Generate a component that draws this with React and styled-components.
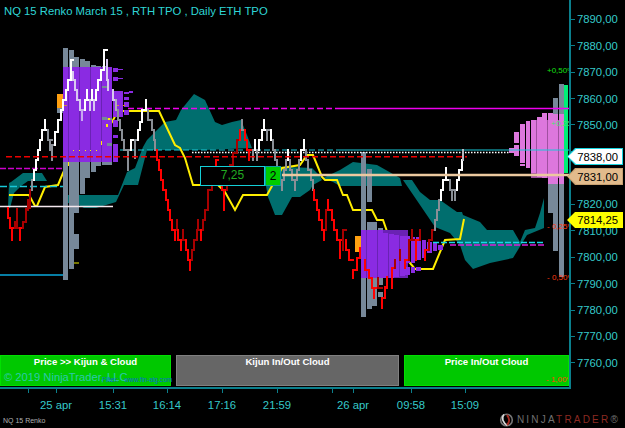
import React from 'react';
import styled, { createGlobalStyle } from 'styled-components';

const GlobalStyle = createGlobalStyle`
  html, body { margin: 0; padding: 0; background: #000; }
  body { font-family: "Liberation Sans", Arial, sans-serif; }
`;

const AXIS = '#0b7f8c';
const LABEL = '#35c9c9';
const CLOUD = '#006e6e';
const PURPLE = '#8a2be2';
const PINK = '#dd77dd';
const SLATE = '#778899';

// 7840 and 7830 sit behind the price badges, so their rows stay empty
const PRICES = ['7890,00', '7880,00', '7870,00', '7860,00', '7850,00', '', '', '7820,00', '7810,00', '7800,00', '7790,00', '7780,00', '7770,00', '7760,00'];

const TICKS = [
    { x: 28 },
    { x: 56, label: '25 apr' },
    { x: 113, label: '15:31' },
    { x: 167, label: '16:14' },
    { x: 222, label: '17:16' },
    { x: 277, label: '21:59' },
    { x: 332 },
    { x: 353, label: '26 apr' },
    { x: 411, label: '09:58' },
    { x: 465, label: '15:09' },
];

const CLOUDS = [
    '9,183 11,182 23,173 42,173 47,181 28,181 21,186 14,193 10,208 8,208',
    '63,195 118,195 127,172 135,168 143,147 147,140 165,122 176,120 181,110 194,94 205,100 215,122 222,125 232,122 241,120 247,135 252,148 205,150 147,150 138,185 124,185 116,202 96,208 84,208 75,203 63,203',
    '266,186 268,197 275,215 282,215 292,197 300,197 310,190 313,185 322,180 320,176 312,168 265,166',
    '323,178 340,170 353,162 377,165 400,178 402,186 340,186 333,182',
    '403,180 412,180 420,192 430,200 440,200 457,212 462,212 463,215 480,222 487,230 513,230 520,242 525,230 535,228 540,213 544,198 544,228 527,235 513,258 490,263 473,269 465,260 460,245 450,233 435,227',
];

const YELLOW = '9,195 29,195 35,206 37,206 45,187 58,185 63,173 68,163 107,130 112,122 118,111 159,111 175,145 180,148 185,158 193,185 218,185 225,192 235,210 243,195 267,195 282,168 300,165 307,155 313,155 322,177 325,180 337,180 343,195 347,195 353,210 372,210 377,220 383,220 390,240 410,263 415,269 433,269 445,240 460,239 464,219';

// bits of the kijun and poc marks that show through the profile: [x, y, w, h, fill]
const MARKS = [
    [108, 118, 2, 2, '#ffee00'], [106, 124, 2, 3, '#ffee00'], [101, 141, 1, 4, '#ffee00'], [68, 162, 1, 4, '#ffee00'],
    [73, 150, 1, 1, '#ffee00'], [79, 150, 1, 1, '#ffee00'], [85, 150, 1, 1, '#ffee00'], [90, 150, 1, 1, '#ffee00'], [96, 150, 1, 1, '#ffee00'],
    [64, 105, 3, 1, '#d09040'], [117, 105, 2, 1, '#d09040'], [123, 105, 2, 1, '#d0a000'],
];

// renko bricks: [x, top, height, colour]
const W = '#ffffff', G = '#8a8f96', R = '#ff0000', D = '#a80000', L = '#d8c8f0';
const RENKO = [
    [8, 208, 10, R], [10, 218, 10, R], [12, 228, 12, R], [15, 222, 6, D], [17, 209, 19, D], [20, 228, 12, R], [23, 222, 6, D], [26, 209, 11, D], [28, 200, 10, D], [30, 190, 18, D],
    [32, 180, 10, G], [34, 170, 10, W], [36, 160, 10, W], [38, 150, 10, W], [40, 140, 10, W], [42, 130, 10, W], [45, 120, 10, W], [48, 130, 10, G], [50, 140, 10, G], [52, 145, 15, G],
    [55, 132, 13, W], [58, 120, 12, W], [61, 110, 10, W], [63, 100, 10, W], [66, 90, 10, W], [68, 80, 10, W], [71, 60, 20, W], [73, 72, 8, L], [75, 80, 10, L], [77, 90, 10, L], [80, 100, 10, L], [82, 110, 10, '#c8a8f0'],
    [85, 100, 10, W], [87, 90, 10, W], [90, 100, 10, L], [92, 90, 10, W], [94, 100, 10, L], [96, 90, 10, W], [98, 80, 10, W], [101, 70, 10, W], [104, 50, 20, W], [107, 60, 20, L], [108, 80, 10, L], [113, 90, 10, L], [116, 100, 10, '#b0b0b8'], [118, 110, 10, G], [120, 120, 10, G], [122, 130, 10, G], [124, 140, 10, G], [128, 150, 20, G],
    [131, 140, 10, W], [135, 140, 18, G], [138, 130, 10, W], [140, 122, 8, W], [142, 110, 12, W], [146, 100, 10, W], [148, 110, 10, G], [152, 120, 10, G], [154, 130, 10, G], [155, 140, 10, G],
    [157, 150, 10, R], [159, 160, 10, R], [161, 170, 10, R], [163, 180, 10, R], [166, 190, 10, R], [168, 200, 10, R], [170, 210, 10, R], [172, 220, 10, R], [175, 230, 10, R], [177, 220, 10, D], [178, 230, 10, R], [181, 240, 10, R], [183, 230, 10, D], [186, 240, 10, R], [188, 250, 10, R], [190, 260, 10, R],
    [192, 250, 10, D], [194, 240, 10, D], [197, 230, 10, D], [198, 220, 10, D], [201, 230, 10, R], [203, 220, 10, D], [205, 210, 10, D], [208, 190, 20, D], [212, 180, 10, D], [216, 160, 20, R], [218, 170, 15, R], [222, 185, 5, R], [224, 190, 20, R], [227, 180, 10, D], [230, 165, 15, D], [233, 153, 14, D], [237, 140, 13, D], [240, 130, 10, R], [242, 120, 10, G], [245, 130, 10, R], [247, 140, 10, R], [249, 150, 10, R],
    [253, 150, 10, G], [255, 140, 10, W], [257, 150, 10, G], [259, 140, 10, W], [262, 130, 10, W], [264, 120, 10, W], [267, 130, 10, G], [271, 130, 10, W], [273, 140, 10, G], [275, 150, 10, G], [277, 160, 10, G], [280, 170, 10, G], [282, 180, 10, G], [284, 170, 10, G], [286, 160, 10, G], [288, 150, 10, W], [290, 160, 10, G], [292, 170, 10, G], [295, 180, 10, G], [297, 170, 10, G], [299, 160, 10, G], [301, 150, 10, W], [304, 140, 10, W], [306, 150, 10, G], [308, 160, 10, G], [311, 170, 10, G], [313, 180, 10, G],
    [314, 190, 10, R], [317, 200, 10, R], [319, 210, 10, R], [322, 220, 10, R], [324, 230, 10, R], [326, 210, 20, D], [328, 200, 10, R], [332, 210, 10, R], [334, 220, 10, R], [337, 230, 10, R], [340, 240, 18, R], [343, 230, 20, D], [346, 240, 10, R], [349, 250, 10, R], [353, 270, 8, R], [357, 258, 12, R], [360, 248, 10, R], [365, 260, 10, R], [369, 270, 8, R], [372, 278, 10, R], [374, 288, 10, R], [378, 278, 10, D], [382, 298, 10, R], [385, 287, 11, R], [387, 277, 11, R], [392, 268, 20, R], [395, 260, 8, D], [400, 250, 10, D], [405, 260, 8, R], [409, 240, 20, D], [412, 230, 10, D], [416, 240, 20, R], [420, 230, 10, D], [425, 250, 10, R], [429, 240, 10, D], [432, 230, 10, D],
    [435, 220, 10, G], [437, 210, 10, G], [439, 200, 10, G], [441, 190, 10, W], [443, 180, 10, W], [446, 168, 12, W], [450, 180, 10, G], [452, 190, 10, G], [455, 190, 10, G], [457, 180, 10, W], [459, 170, 10, W], [462, 160, 10, W], [463, 150, 10, '#b8b8c0'],
];

// volume-at-price columns: [x, w, top, bottom, fill]
const COLUMNS = [
    [63, 5, 48, 280, SLATE], [69, 5, 50, 269, SLATE], [74, 5, 57, 213, SLATE], [74, 5, 234, 249, SLATE], [74, 5, 262, 264, '#777700'], [80, 5, 59, 194, SLATE], [85, 5, 61, 178, SLATE], [91, 5, 65, 172, SLATE], [96, 5, 66, 166, SLATE], [102, 5, 66, 165, SLATE], [107, 5, 67, 165, SLATE],
    [361, 5, 152, 317, SLATE], [367, 5, 169, 202, SLATE], [367, 5, 222, 309, SLATE], [372, 5, 222, 306, SLATE], [378, 5, 228, 285, SLATE], [378, 5, 292, 297, SLATE],
    [548, 5, 150, 213, SLATE], [553, 5, 98, 251, SLATE], [559, 5, 84, 277, SLATE],
    [63, 5, 67, 162, PURPLE], [69, 5, 67, 162, PURPLE], [74, 5, 67, 162, PURPLE], [80, 5, 67, 162, PURPLE], [85, 5, 67, 162, PURPLE], [91, 5, 67, 162, PURPLE], [96, 5, 67, 162, PURPLE],
    [102, 5, 67, 86, PURPLE], [102, 5, 88, 117, PURPLE], [102, 5, 120, 162, PURPLE], [107, 5, 67, 118, PURPLE], [107, 5, 120, 143, PURPLE], [107, 5, 146, 162, PURPLE],
    [113, 5, 68, 72, PURPLE], [113, 5, 77, 81, PURPLE], [113, 5, 91, 117, PURPLE], [113, 5, 120, 127, PURPLE], [113, 5, 135, 138, PURPLE], [113, 5, 144, 162, PURPLE],
    [118, 5, 69, 70, PURPLE], [118, 5, 78, 79, PURPLE], [118, 5, 91, 117, PURPLE], [124, 5, 92, 94, PURPLE], [124, 5, 97, 100, PURPLE], [124, 5, 102, 107, PURPLE], [124, 5, 110, 115, PURPLE], [129, 4, 91, 93, PURPLE],
    [361, 5, 230, 278, PURPLE], [367, 5, 230, 278, PURPLE], [372, 5, 230, 278, PURPLE], [378, 5, 230, 278, PURPLE], [383, 5, 233, 278, PURPLE], [389, 5, 234, 278, PURPLE], [394, 5, 235, 277, PURPLE], [400, 5, 236, 276, PURPLE], [405, 5, 236, 263, PURPLE], [405, 5, 267, 275, PURPLE], [411, 4, 237, 263, PURPLE], [411, 4, 267, 273, PURPLE], [416, 5, 237, 260, PURPLE], [416, 5, 267, 271, PURPLE], [422, 4, 240, 258, PURPLE], [427, 5, 242, 253, PURPLE], [433, 4, 243, 251, PURPLE], [438, 5, 245, 250, PURPLE],
    [509, 5, 148, 153, PINK], [514, 5, 132, 143, PINK], [514, 5, 145, 156, PINK], [520, 5, 124, 163, PINK], [520, 5, 164, 166, PINK], [526, 4, 121, 168, PINK], [531, 5, 120, 173, PINK], [537, 5, 117, 177, PINK], [542, 5, 113, 178, PINK], [548, 5, 113, 184, PINK], [553, 5, 114, 184, PINK], [559, 5, 114, 184, PINK],
];

const Screen = styled.div`
  display: flex;
  flex-direction: column;
  width: 625px;
  height: 428px;
  overflow: hidden;
  background: #000;
`;

const ChartRow = styled.div`
  display: flex;
  height: 389px;
`;

const Plot = styled.div`
  position: relative;
  display: flex;
  flex-direction: column;
  justify-content: space-between;
  box-sizing: border-box;
  width: 571px;
  padding-bottom: 1px;
  border-right: 2px solid ${AXIS};
  border-bottom: 2px solid ${AXIS};
`;

const ChartSvg = styled.svg`
  position: absolute;
  top: 0;
  left: 0;
`;

const Title = styled.div`
  position: relative;
  padding: 5px 0 0 4px;
  font-size: 11.3px;
  line-height: 13px;
  color: #2fd6d6;
`;

const SignalRow = styled.div`
  position: relative;
  display: flex;
  gap: 5px;
  height: 31px;
`;

const Signal = styled.div`
  position: relative;
  box-sizing: border-box;
  flex: 0 0 ${p => p.$w}px;
  text-align: center;
  font-size: 9.6px;
  line-height: 12px;
  font-weight: 700;
  color: #fff;
  background: ${p => (p.$on ? '#00c800' : '#666')};
  border: 1px solid ${p => (p.$on ? '#00e000' : '#808080')};
`;

const Copyright = styled.span`
  position: absolute;
  left: 3px;
  top: 14px;
  font-size: 11.2px;
  line-height: 14px;
  font-weight: 400;
  white-space: nowrap;
  color: #2cc8ac;
`;

const FilterNote = styled.span`
  position: absolute;
  left: 101px;
  top: 19px;
  font-size: 6.6px;
  line-height: 9px;
  font-weight: 400;
  word-spacing: 4px;
  white-space: nowrap;
  color: #0a6ad0;
`;

const LossNote = styled.span`
  position: absolute;
  right: 0;
  top: 19px;
  width: 22px;
  overflow: hidden;
  font-size: 8px;
  line-height: 10px;
  font-weight: 400;
  text-align: left;
  white-space: nowrap;
  color: #ff4400;
`;

const PriceAxis = styled.div`
  position: relative;
  display: flex;
  flex-direction: column;
  padding-top: 6px;
`;

const PriceRow = styled.div`
  display: flex;
  align-items: center;
  height: 26.45px;
  font-size: 11.3px;
  color: ${LABEL};
  &::before {
    content: '';
    width: 4px;
    height: 1px;
    margin-right: 2px;
    background: ${AXIS};
  }
`;

const Badge = styled.div`
  position: absolute;
  left: -4px;
  top: ${p => p.$top}px;
  box-sizing: border-box;
  width: 56px;
  height: ${p => p.$h}px;
  padding: 1px;
  background: ${p => p.$edge};
  clip-path: polygon(0 50%, 8px 0, 100% 0, 100% 100%, 8px 100%);
`;

const BadgeFace = styled.div`
  display: flex;
  align-items: center;
  justify-content: flex-end;
  height: 100%;
  padding-right: 4px;
  font-size: 11.3px;
  color: #000;
  background: ${p => p.$face};
  clip-path: polygon(0 50%, 8px 0, 100% 0, 100% 100%, 8px 100%);
`;

const PnlBox = styled.div`
  position: absolute;
  left: 200px;
  top: 166px;
  display: flex;
  height: 20px;
`;

const PnlValue = styled.div`
  box-sizing: border-box;
  width: 65px;
  text-align: center;
  font-size: 12px;
  line-height: 17px;
  color: #22aa22;
  background: #000;
  border: 1.5px solid #14cfd6;
`;

const PnlCount = styled.div`
  box-sizing: border-box;
  width: 16px;
  text-align: center;
  font-size: 12px;
  line-height: 18px;
  color: #000;
  background: #00cc00;
  border: 1px solid #0aa0a0;
`;

const TimeAxis = styled.div`
  display: flex;
  height: 23px;
`;

const TimeSlot = styled.div`
  position: relative;
  display: flex;
  justify-content: center;
  width: 0;
  margin-left: ${p => p.$gap}px;
  padding-top: 10px;
  font-size: 11.3px;
  line-height: 13px;
  white-space: nowrap;
  color: ${LABEL};
  &::before {
    content: '';
    position: absolute;
    top: 0;
    left: 0;
    width: 1px;
    height: 4px;
    background: ${AXIS};
  }
`;

const Footer = styled.div`
  display: flex;
  align-items: center;
  justify-content: space-between;
  height: 16px;
  padding: 0 5px 0 3px;
`;

const SheetName = styled.span`
  font-size: 7px;
  color: #b0b0b0;
`;

const Brand = styled.div`
  display: flex;
  align-items: center;
  gap: 2px;
`;

const Wordmark = styled.span`
  font-size: 10px;
  line-height: 10px;
  letter-spacing: 2.2px;
  color: #707070;
`;

const WordmarkRed = styled.span`
  color: #8c2a22;
`;

const Columns = () => (
    <g>
        {COLUMNS.map(([x, w, top, bottom, fill], i) => (
            <rect key={i} x={x} y={top} width={w} height={bottom - top} fill={fill} />
        ))}
    </g>
);

// the step that joins one brick to the next one
const joinY = (a, b) => (b[1] >= a[1] + a[2] - 1 ? a[1] + a[2] : a[1]);

const Bricks = () => (
    <g strokeWidth="2" strokeLinecap="square">
        {RENKO.map(([x, top, h, color], i) => {
            const next = RENKO[i + 1];
            return (
                <g key={i} stroke={color}>
                    <line x1={x} x2={x} y1={top} y2={top + h} />
                    {next && next[0] - x < 5 && <line x1={x} x2={next[0]} y1={joinY(RENKO[i], next)} y2={joinY(RENKO[i], next)} />}
                </g>
            );
        })}
    </g>
);

const Chart = () => (
    <ChartSvg width="569" height="387" viewBox="0 0 569 387">
        {CLOUDS.map((points, i) => (
            <polygon key={i} points={points} fill={CLOUD} />
        ))}
        <polyline points={YELLOW} fill="none" stroke="#ffee00" strokeWidth="2" />
        <rect x="63" y="67" width="49" height="95" fill="#6a22b4" />
        <rect x="361" y="230" width="47" height="48" fill="#6a22b4" />
        <rect x="531" y="120" width="33" height="58" fill="#a050a0" />
        <rect x="57" y="94" width="6" height="14" fill="#ffa010" />
        <rect x="57" y="108" width="6" height="5" fill={SLATE} />
        <rect x="355" y="236" width="7" height="16" fill="#ffa010" />
        <rect x="564" y="85" width="4" height="88" fill="#00ee77" />
        <Columns />
        {MARKS.map(([x, y, w, h, fill], i) => (
            <rect key={i} x={x} y={y} width={w} height={h} fill={fill} />
        ))}
        <line x1="128" x2="340" y1="108.5" y2="108.5" stroke="#ee00ee" strokeWidth="1.5" strokeDasharray="6 3" />
        <line x1="340" x2="569" y1="108.5" y2="108.5" stroke="#ee00ee" strokeWidth="1.5" />
        <line x1="0" x2="63" y1="168.5" y2="168.5" stroke="#cc00cc" strokeWidth="1.5" strokeDasharray="6 2" />
        <line x1="0" x2="63" y1="186.5" y2="186.5" stroke="#18c8d8" strokeWidth="1.5" strokeDasharray="7 3" />
        <line x1="0" x2="113" y1="206.5" y2="206.5" stroke="#f4e8ee" strokeWidth="1.5" />
        <line x1="0" x2="63" y1="275" y2="275" stroke="#0aa8dc" strokeWidth="1.5" />
        <line x1="120" x2="340" y1="150" y2="150" stroke="#18c8d8" strokeWidth="1" strokeDasharray="6 3" />
        <line x1="340" x2="569" y1="150" y2="150" stroke="#18c8d8" strokeWidth="1" />
        <line x1="192" x2="510" y1="152.5" y2="152.5" stroke="#fff" strokeWidth="1.5" strokeDasharray="1.5 1.5" />
        <line x1="433" x2="545" y1="242.5" y2="242.5" stroke="#18d8e8" strokeWidth="1.5" strokeDasharray="6 2" />
        <line x1="450" x2="545" y1="245" y2="245" stroke="#d820d8" strokeWidth="1.5" strokeDasharray="6 2" />
        <Bricks />
        <line x1="6" x2="467" y1="156.8" y2="156.8" stroke="#ee0000" strokeWidth="1.5" strokeDasharray="6 3" />
        <line x1="282" x2="569" y1="175" y2="175" stroke="#ecc9a0" strokeWidth="2.5" />
        <g fontSize="8" fontFamily="Liberation Sans, Arial, sans-serif">
            <text x="547" y="73" fill="#14e014">+0,50%</text>
            <text x="551" y="126" fill="#50e070">+0,25</text>
            <text x="547" y="229" fill="#ff3a10">- 0,25%</text>
            <text x="547" y="280" fill="#ff3a10">- 0,50%</text>
        </g>
    </ChartSvg>
);

const NinjaMark = () => (
    <svg width="17" height="14" viewBox="0 0 17 14">
        <circle cx="8.5" cy="7" r="5.8" fill="none" stroke="#777" strokeWidth="1.6" />
        <path d="M6 1.5 C3 5 5 10 9.5 12.5" fill="none" stroke="#d8d8d8" strokeWidth="1.6" />
        <path d="M9 2 C11.5 5 12 9 9 12" fill="none" stroke="#a52a20" strokeWidth="2" />
    </svg>
);

export default function App() {
    return (
        <Screen>
            <GlobalStyle />
            <ChartRow>
                <Plot>
                    <Chart />
                    <Title>NQ 15 Renko March 15 , RTH TPO , Daily ETH TPO</Title>
                    <PnlBox>
                        <PnlValue>7,25</PnlValue>
                        <PnlCount>2</PnlCount>
                    </PnlBox>
                    <SignalRow>
                        <Signal $w={171} $on>
                            Price &gt;&gt; Kijun &amp; Cloud
                            <Copyright>© 2019 NinjaTrader, LLC</Copyright>
                            <FilterNote>Filter: www.fin-alg.com</FilterNote>
                        </Signal>
                        <Signal $w={223}>Kijun In/Out Cloud</Signal>
                        <Signal $w={165} $on>
                            Price In/Out Cloud
                            <LossNote>- 1,00%</LossNote>
                        </Signal>
                    </SignalRow>
                </Plot>
                <PriceAxis>
                    {PRICES.map((price, i) => (
                        <PriceRow key={i}>{price}</PriceRow>
                    ))}
                    <Badge $top={148} $h={17} $edge="#19d4e0">
                        <BadgeFace $face="#fff">7838,00</BadgeFace>
                    </Badge>
                    <Badge $top={168} $h={17} $edge="#c8a070">
                        <BadgeFace $face="#e2bb8c">7831,00</BadgeFace>
                    </Badge>
                    <Badge $top={212} $h={16} $edge="#ffff00">
                        <BadgeFace $face="#ffff00">7814,25</BadgeFace>
                    </Badge>
                </PriceAxis>
            </ChartRow>
            <TimeAxis>
                {TICKS.map((tick, i) => (
                    <TimeSlot key={tick.x} $gap={i === 0 ? tick.x : tick.x - TICKS[i - 1].x}>
                        {tick.label}
                    </TimeSlot>
                ))}
            </TimeAxis>
            <Footer>
                <SheetName>NQ 15 Renko</SheetName>
                <Brand>
                    <NinjaMark />
                    <Wordmark>
                        NINJA<WordmarkRed>TRADER</WordmarkRed>®
                    </Wordmark>
                </Brand>
            </Footer>
        </Screen>
    );
}
